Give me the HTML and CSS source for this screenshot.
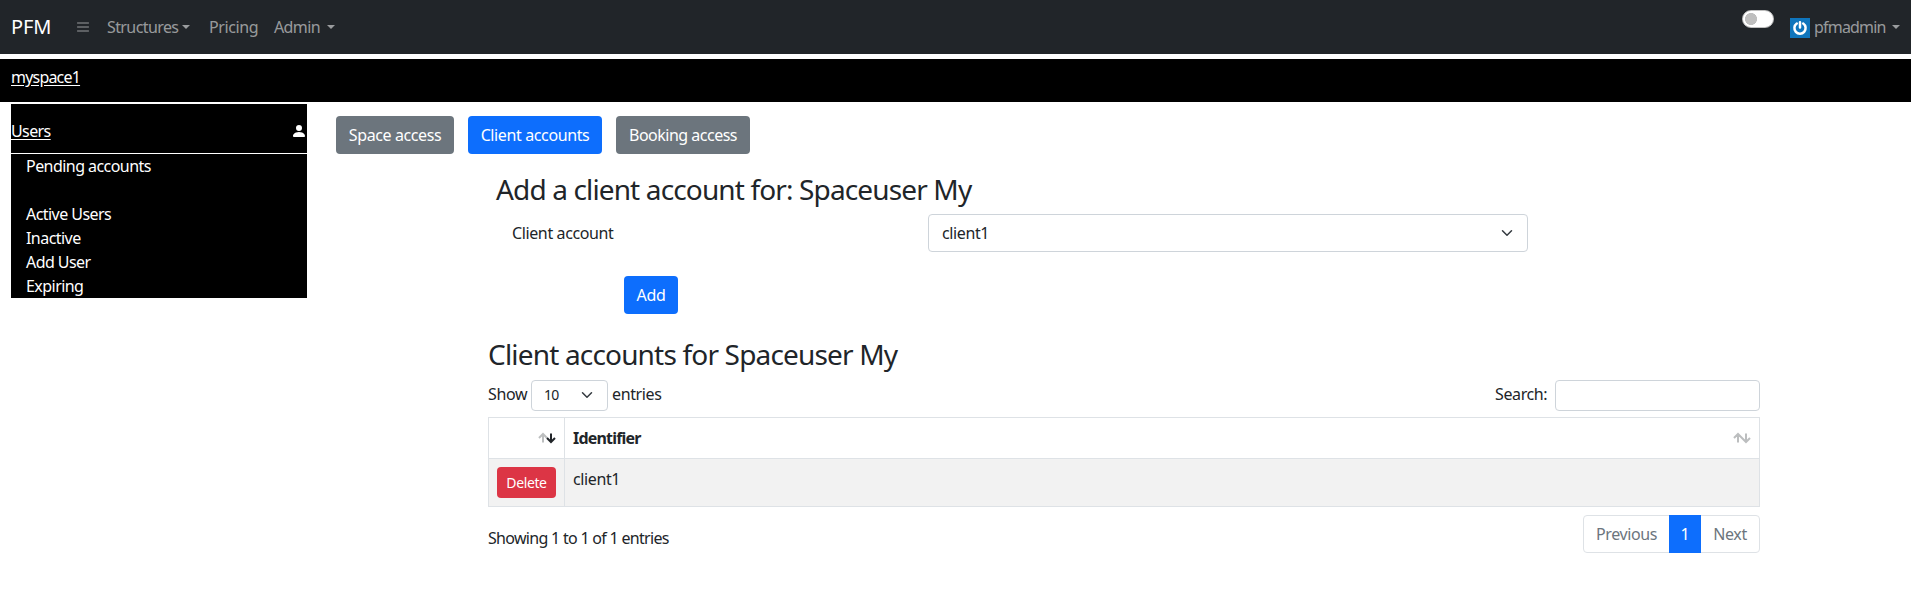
FILE: index.html
```html
<!DOCTYPE html>
<html lang="en">
<head>
<meta charset="utf-8">
<title>PFM</title>
<link rel="stylesheet" href="styles.css">
</head>
<body>
<nav class="navbar">
  <a class="brand">PFM</a>
  <svg class="menu-icon" width="16" height="16" viewBox="0 0 16 16"><path d="M2.5 12h11M2.5 8h11M2.5 4h11" fill="none" stroke="currentColor" stroke-linecap="round"/></svg>
  <a class="nav-link structures">Structures<i class="caret"></i></a>
  <a class="nav-link pricing">Pricing</a>
  <a class="nav-link admin">Admin<i class="caret"></i></a>
  <div class="nav-right">
    <span class="switch"></span>
    <svg class="avatar" width="20" height="20" viewBox="0 0 20 20"><path fill="#0f75bc" d="M0 0h20v20H0z"/><path d="M6.800 5.500A5.600 5.600 0 1 0 13.200 5.500M10 4.300v5.200" fill="none" stroke="#fff" stroke-width="2.500" stroke-linecap="round"/></svg>
    <a class="nav-link user">pfmadmin<i class="caret"></i></a>
  </div>
</nav>
<header class="space-bar"><a>myspace1</a></header>
<div class="page">
  <aside class="sidebar">
    <div class="side-head"><a>Users</a><svg width="16" height="16" viewBox="0 0 16 16" fill="currentColor"><path d="M3 14s-1 0-1-1 1-4 6-4 6 3 6 4-1 1-1 1H3zm5-6a3 3 0 1 0 0-6 3 3 0 0 0 0 6z"/></svg></div>
    <a class="side-link pending">Pending accounts</a>
    <a class="side-link">Active Users</a>
    <a class="side-link">Inactive</a>
    <a class="side-link">Add User</a>
    <a class="side-link">Expiring</a>
  </aside>
  <main class="main">
    <div class="tabs">
      <button class="btn space">Space access</button>
      <button class="btn primary client">Client accounts</button>
      <button class="btn booking">Booking access</button>
    </div>
    <section class="form">
      <h3 class="form-title">Add a client account for: Spaceuser My</h3>
      <div class="form-row">
        <label>Client account</label>
        <div class="select">client1<svg width="16" height="12" viewBox="0 0 16 16"><path d="m2 5 6 6 6-6"/></svg></div>
      </div>
      <button class="btn primary add">Add</button>
    </section>
    <section class="accounts">
      <h3 class="list-title">Client accounts for Spaceuser My</h3>
      <div class="controls">
        <span class="show">Show</span>
        <div class="select small">10<svg width="16" height="12" viewBox="0 0 16 16"><path d="m2 5 6 6 6-6"/></svg></div>
        <span>entries</span>
        <label class="search">Search:</label><input class="search-input">
      </div>
      <table class="table">
        <thead><tr>
          <th class="action"><svg class="sort" width="18" height="12" viewBox="0 0 18 12"><g class="off"><path d="M5 10.500V2M1 6l4-4 4 4"/></g><g class="on"><path d="M13 1.500V10M9 6l4 4 4-4"/></g></svg></th>
          <th><div class="head-cell">Identifier<svg class="sort" width="18" height="12" viewBox="0 0 18 12"><g class="off"><path d="M5 10.500V2M1 6l4-4 4 4M13 1.500V10M9 6l4 4 4-4"/></g></svg></div></th>
        </tr></thead>
        <tbody><tr>
          <td><button class="btn danger">Delete</button></td>
          <td>client1</td>
        </tr></tbody>
      </table>
      <div class="footer">
        <span class="info">Showing 1 to 1 of 1 entries</span>
        <div class="pagination"><a class="prev">Previous</a><a class="current">1</a><a class="next">Next</a></div>
      </div>
    </section>
  </main>
</div>
</body>
</html>
```
FILE: styles.css
```css
* { box-sizing: border-box; }
body {
  margin: 0;
  background: #fff;
  color: #212529;
  font: 16px/24px "Noto Sans", sans-serif;
  letter-spacing: -.38px;
}
.navbar {
  display: flex;
  height: 54px;
  padding: 0 11px 1px;
  align-items: center;
  background: #212529;
  color: rgba(255, 255, 255, .55);
}
.brand { width: 64px; color: #fff; font-size: 20px; line-height: 30px; letter-spacing: -.1px; }
.menu-icon { width: 16px; margin-right: 16px; }
.nav-link { display: flex; align-items: center; white-space: nowrap; }
.structures { width: 102px; letter-spacing: -.6px; }
.pricing { width: 65px; }
.caret {
  margin-left: 4px;
  border: 4.8px solid transparent;
  border-top-color: currentColor;
  border-bottom: 0;
}
.admin { letter-spacing: -.6px; }
.admin .caret { margin-left: 7px; }
.nav-right { display: flex; align-items: center; margin-left: auto; }
.switch {
  align-self: flex-start;
  width: 32px;
  height: 18px;
  margin: -5px 16px 0 0;
  border: 1px solid #bfbfbf;
  border-radius: 9px;
  background: radial-gradient(circle at 8px 8px, #bfbfbf 5.700px, #fff 6.300px);
}
.avatar { margin: 3px 4px 0 0; }
.user { width: 86px; justify-content: space-between; letter-spacing: -.8px; }
.user .caret { margin-left: 0; }
.space-bar {
  height: 43px;
  margin-top: 5px;
  padding: 6px 11px;
  background: #000;
  color: #fff;
}
.space-bar a, .side-head a { text-decoration: underline; text-underline-offset: 2px; }
.space-bar a { letter-spacing: -.8px; }
.page { display: flex; }
.sidebar {
  width: 296px;
  height: 194px;
  margin: 2px 0 0 11px;
  background: #000;
  color: #fff;
}
.side-head {
  display: flex;
  height: 50px;
  padding: 5px 0 0;
  align-items: center;
  justify-content: space-between;
  border-bottom: 1px solid #fff;
}
.side-head a { letter-spacing: -.6px; }
.side-link { display: block; padding-left: 15px; letter-spacing: -.55px; }
.pending { margin-bottom: 24px; }
.main { width: 1424px; margin: 14px 0 0 29px; }
.tabs { display: flex; gap: 14px; }
.btn {
  height: 38px;
  padding: 0;
  border: 0;
  border-radius: 4px;
  background: #6c757d;
  color: #fff;
  font: inherit;
  letter-spacing: inherit;
}
.primary { background: #0d6efd; }
.space { width: 118px; letter-spacing: -.4px; }
.client, .booking { width: 134px; }
.booking { letter-spacing: -.5px; }
.form { margin-left: 160px; padding-top: 18px; }
h3 { margin: 0; font-weight: 400; font-size: 28px; line-height: 34px; letter-spacing: -.82px; }
.form-title { margin-bottom: 8px; letter-spacing: -.86px; }
.form-row { display: flex; align-items: center; padding-left: 16px; }
.form-row label { width: 416px; }
.select {
  display: flex;
  width: 600px;
  height: 38px;
  padding: 0 12px 0 13px;
  align-items: center;
  justify-content: space-between;
  border: 1px solid #ced4da;
  border-radius: 4px;
}
.select path {
  fill: none;
  stroke: #343a40;
  stroke-width: 2;
  stroke-linecap: round;
  stroke-linejoin: round;
}
.add { display: block; width: 54px; margin: 24px 0 0 128px; }
.accounts { width: 1272px; margin: 23px 0 0 152px; }
.controls { display: flex; height: 37px; margin-top: 9px; }
.controls > span, .controls > label { line-height: 29px; }
.show { width: 43px; }
.small {
  width: 77px;
  height: 31px;
  margin-right: 4px;
  padding: 0 12px 1px;
  font-size: 14px;
  letter-spacing: -.8px;
}
.search { width: 60px; margin-left: auto; }
.search-input {
  width: 205px;
  height: 31px;
  border: 1px solid #ced4da;
  border-radius: 4px;
}
.table { width: 100%; border-collapse: collapse; table-layout: fixed; }
th, td { padding: 8px; border: 1px solid #dee2e6; text-align: left; vertical-align: top; }
th { height: 41px; letter-spacing: -.8px; }
td { height: 48px; background: #f2f2f2; }
.action { width: 76px; text-align: right; }
.head-cell { display: flex; align-items: center; justify-content: space-between; }
.sort path { fill: none; stroke: #212529; stroke-width: 2; }
.sort .off path { stroke: #bcbebf; }
.danger { display: block; width: 59px; height: 31px; background: #dc3545; font-size: 14px; }
.footer { display: flex; justify-content: space-between; margin-top: 8px; }
.info { padding-top: 11px; letter-spacing: -.7px; }
.pagination {
  display: flex;
  width: 177px;
  height: 38px;
  border: 1px solid #dee2e6;
  border-radius: 4px;
  color: #6c757d;
  line-height: 36px;
  text-align: center;
}
.prev { width: 85px; }
.current { width: 32px; margin: -1px 0; background: #0d6efd; color: #fff; line-height: 38px; }
.next { flex: 1; }
```
